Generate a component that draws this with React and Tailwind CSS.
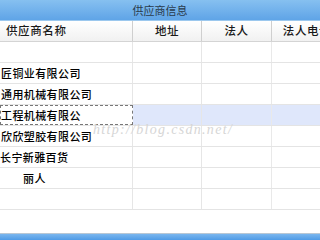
const rows = [
  { name: '', pad: 'pl-0' },
  { name: '匠铜业有限公司', pad: 'pl-[1px]' },
  { name: '通用机械有限公司', pad: 'pl-[1px]' },
  { name: '工程机械有限公', pad: 'pl-0', selected: true },
  { name: '欣欣塑胶有限公司', pad: 'pl-[1px]' },
  { name: '长宁新雅百货', pad: 'pl-0' },
  { name: '丽人', pad: 'pl-[23px]' },
  { name: '', pad: 'pl-0' },
];

const App = () => {
  return (
    <div className="relative w-[320px] h-[240px] overflow-hidden bg-white text-[#111] font-['Noto_Sans_CJK_SC','Noto_Sans',sans-serif]">
      {/* Title bar */}
      <div className="h-[21px] flex items-center justify-center bg-gradient-to-b from-[#86c0f0] to-[#5fa4e7] border-b border-[#9cc8ee] text-[11px] text-[#2a3b4c]">
        供应商信息
      </div>

      {/* Header */}
      <div className="flex h-[21px] bg-gradient-to-b from-white to-[#f1f1f1] border-b border-[#d4d4d4] text-[11.5px] font-medium text-[#1a1a1a] overflow-hidden">
        <div className="w-[133px] shrink-0 flex items-center pl-[6px] tracking-[0.6px] border-r border-[#cfcfcf]">供应商名称</div>
        <div className="w-[69px] shrink-0 flex items-center justify-center tracking-[0.6px] border-r border-[#cfcfcf]">地址</div>
        <div className="w-[70px] shrink-0 flex items-center justify-center tracking-[0.6px] border-r border-[#cfcfcf]">法人</div>
        <div className="w-[70px] shrink-0 flex items-center justify-center tracking-[0.6px]">法人电话</div>
      </div>

      {/* Body */}
      <div>
        {rows.map((row, i) => (
          <div key={i} className="flex h-[21px] border-b border-[#e4e4e4] text-[11px] tracking-[0.4px] text-black font-medium overflow-hidden">
            <div
              className={`w-[133px] shrink-0 flex items-center whitespace-nowrap overflow-hidden ${row.pad} ${
                row.selected ? 'border border-dashed border-[#777]' : 'border-r border-[#e6e6e6]'
              }`}
            >
              {row.name}
            </div>
            <div className={`w-[69px] shrink-0 border-r border-[#e6e6e6] ${row.selected ? 'bg-[#dfe7fb]' : ''}`}></div>
            <div className={`w-[70px] shrink-0 border-r border-[#e9e9e9] ${row.selected ? 'bg-[#dfe7fb]' : ''}`}></div>
            <div className={`w-[70px] shrink-0 ${row.selected ? 'bg-[#dfe7fb]' : ''}`}></div>
          </div>
        ))}
      </div>

      {/* watermark */}
      <div className="absolute left-[93px] top-[119px] text-[14px] tracking-[1.3px] italic text-[#d6d6d6] font-['Liberation_Serif',serif] pointer-events-none">
        http://blog.csdn.net/
      </div>

      {/* bottom bar */}
      <div className="absolute left-0 right-0 bottom-0 h-[7px] border-t border-[#b9c7d4] bg-gradient-to-b from-[#7ab6ee] to-[#4f9be6]"></div>
    </div>
  );
};

export default App;
